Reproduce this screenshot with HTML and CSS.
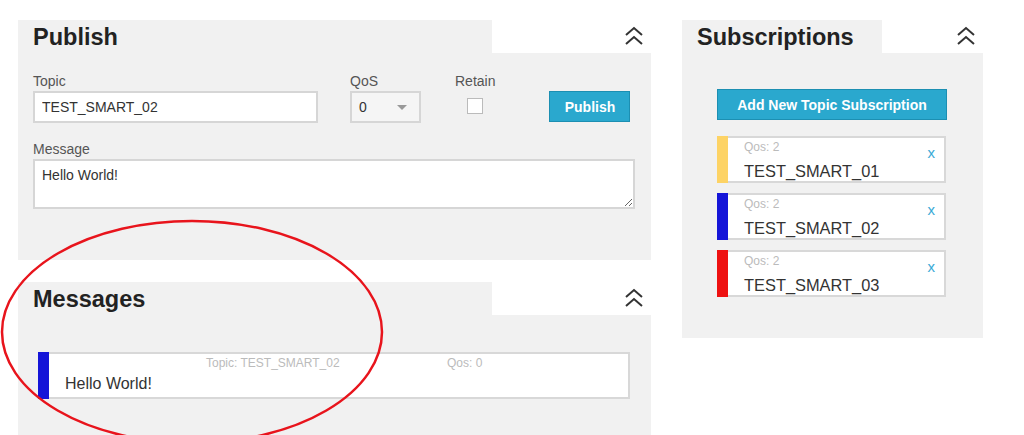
FILE: index.html
```html
<!DOCTYPE html>
<html lang="en">
<head>
    <meta charset="UTF-8">
    <meta name="viewport" content="width=device-width, initial-scale=1.0">
    <title>MQTT Client</title>
    <link rel="stylesheet" href="styles.css">
</head>
<body>
    <div class="layout">
        <div class="left-column">
            <!-- Publish panel -->
            <div class="panel">
                <div class="panel-header">
                    <h2 class="panel-title tab-wide">Publish</h2>
                    <div class="panel-toggle">
                        <svg width="20" height="20" viewBox="0 0 20 20"><path d="M2 9 L10 2 L18 9 M2 18 L10 11 L18 18" fill="none" stroke="#333" stroke-width="2"/></svg>
                    </div>
                </div>
                <div class="panel-body publish-body">
                    <div class="publish-row">
                        <div class="field field-topic">
                            <label>Topic</label>
                            <input type="text" class="text-input" value="TEST_SMART_02">
                        </div>
                        <div class="field field-qos">
                            <label>QoS</label>
                            <div class="select-box">
                                <span>0</span>
                                <span class="select-arrow"></span>
                            </div>
                        </div>
                        <div class="field field-retain">
                            <label>Retain</label>
                            <span class="checkbox"></span>
                        </div>
                        <button class="blue-button publish-button">Publish</button>
                    </div>
                    <div class="field field-message">
                        <label>Message</label>
                        <textarea class="text-area">Hello World!</textarea>
                    </div>
                </div>
            </div>

            <!-- Messages panel -->
            <div class="panel messages-panel">
                <div class="panel-header">
                    <h2 class="panel-title tab-wide">Messages</h2>
                    <div class="panel-toggle">
                        <svg width="20" height="20" viewBox="0 0 20 20"><path d="M2 9 L10 2 L18 9 M2 18 L10 11 L18 18" fill="none" stroke="#333" stroke-width="2"/></svg>
                    </div>
                </div>
                <div class="panel-body messages-body">
                    <div class="message-item">
                        <div class="color-bar bar-blue"></div>
                        <div class="message-content">
                            <div class="message-meta">
                                <span class="meta-topic">Topic: TEST_SMART_02</span>
                                <span class="meta-qos">Qos: 0</span>
                            </div>
                            <div class="message-text">Hello World!</div>
                        </div>
                    </div>
                </div>
            </div>
        </div>

        <!-- Subscriptions panel -->
        <div class="right-column">
            <div class="panel">
                <div class="panel-header">
                    <h2 class="panel-title tab-narrow">Subscriptions</h2>
                    <div class="panel-toggle">
                        <svg width="20" height="20" viewBox="0 0 20 20"><path d="M2 9 L10 2 L18 9 M2 18 L10 11 L18 18" fill="none" stroke="#333" stroke-width="2"/></svg>
                    </div>
                </div>
                <div class="panel-body subs-body">
                    <button class="blue-button add-button">Add New Topic Subscription</button>
                    <div class="sub-list">
                        <div class="sub-item">
                            <div class="color-bar bar-yellow"></div>
                            <div class="sub-content">
                                <div class="sub-qos">Qos: 2</div>
                                <div class="sub-topic">TEST_SMART_01</div>
                            </div>
                            <span class="sub-close">x</span>
                        </div>
                        <div class="sub-item">
                            <div class="color-bar bar-blue"></div>
                            <div class="sub-content">
                                <div class="sub-qos">Qos: 2</div>
                                <div class="sub-topic">TEST_SMART_02</div>
                            </div>
                            <span class="sub-close">x</span>
                        </div>
                        <div class="sub-item">
                            <div class="color-bar bar-red"></div>
                            <div class="sub-content">
                                <div class="sub-qos">Qos: 2</div>
                                <div class="sub-topic">TEST_SMART_03</div>
                            </div>
                            <span class="sub-close">x</span>
                        </div>
                    </div>
                </div>
            </div>
        </div>
    </div>

    <!-- Hand-drawn highlight -->
    <svg class="highlight" width="400" height="216" viewBox="0 0 400 216">
        <ellipse cx="192" cy="113" rx="190" ry="111" fill="none" stroke="#e8141c" stroke-width="2.5"/>
    </svg>
</body>
</html>
```

FILE: styles.css
```css
/* MQTT client layout */
body {
    font-family: "Liberation Sans", Arial, sans-serif;
    background-color: #fff;
    color: #333;
    margin: 0;
    height: 435px;
    overflow: hidden;
}

.layout {
    display: flex;
    gap: 31px;
    padding: 20px 0 0 18px;
}

.left-column {
    width: 633px;
    display: flex;
    flex-direction: column;
    gap: 22px;
}

.right-column {
    width: 301px;
}

/* Panels */
.panel-header {
    display: flex;
    height: 33px;
}

.panel-title {
    margin: 0;
    background-color: #f1f1f1;
    font-size: 23.5px;
    font-weight: bold;
    color: #222;
    padding: 4px 0 0 15px;
    box-sizing: border-box;
    line-height: 26px;
}

.tab-wide {
    width: 474px;
}

.tab-narrow {
    width: 200px;
}

.panel-toggle {
    flex: 1;
    display: flex;
    justify-content: flex-end;
    padding: 6px 7px 0 0;
}

.panel-body {
    background-color: #f1f1f1;
}

/* Publish form */
.publish-body {
    padding: 20px 16px 51px 15px;
}

.publish-row {
    display: flex;
    align-items: flex-start;
}

.field label {
    display: block;
    font-size: 14px;
    line-height: 16px;
    color: #555;
    margin-bottom: 2px;
}

.text-input {
    width: 285px;
    height: 32px;
    box-sizing: border-box;
    border: 2px solid #d6d6d6;
    padding: 0 7px;
    font-family: inherit;
    font-size: 14px;
    color: #333;
    background: #fff;
}

.field-qos {
    margin-left: 32px;
}

.select-box {
    width: 71px;
    height: 32px;
    box-sizing: border-box;
    border: 2px solid #d6d6d6;
    background: #f5f5f5;
    display: flex;
    align-items: center;
    justify-content: space-between;
    padding: 0 12px 0 7px;
    font-size: 14px;
}

.select-arrow {
    width: 0;
    height: 0;
    border-left: 5px solid transparent;
    border-right: 5px solid transparent;
    border-top: 5px solid #999;
}

.field-retain {
    margin-left: 34px;
    display: flex;
    flex-direction: column;
    align-items: center;
}

.checkbox {
    display: block;
    width: 16px;
    height: 16px;
    box-sizing: border-box;
    border: 1px solid #bbb;
    background: #fff;
    margin-top: 7px;
}

.blue-button {
    background-color: #2aa8ce;
    color: #fff;
    border: 1px solid #1c8fb2;
    font-family: inherit;
    font-size: 14px;
    font-weight: bold;
    cursor: pointer;
}

.publish-button {
    width: 81px;
    height: 31px;
    margin: 18px 0 0 54px;
}

.field-message {
    margin-top: 18px;
}

.text-area {
    display: block;
    width: 602px;
    height: 50px;
    box-sizing: border-box;
    border: 2px solid #d6d6d6;
    padding: 6px 7px;
    font-family: inherit;
    font-size: 14px;
    color: #333;
    resize: vertical;
}

/* Messages */
.messages-panel {
    flex: 1;
}

.messages-body {
    padding: 37px 21px 36px 20px;
}

.message-item {
    display: flex;
    height: 47px;
    background: #fff;
    border: 2px solid #d8d8d8;
    border-left: none;
    box-sizing: border-box;
}

.color-bar {
    width: 11px;
    margin: -2px 0;
}

.bar-blue {
    background-color: #1515d8;
}

.bar-yellow {
    background-color: #fdd365;
}

.bar-red {
    background-color: #ee1111;
}

.message-content {
    flex: 1;
    padding-left: 16px;
}

.message-meta {
    font-size: 12px;
    color: #bbb;
    line-height: 14px;
    padding-top: 2px;
}

.meta-topic {
    margin-left: 141px;
}

.meta-qos {
    margin-left: 104px;
}

.message-text {
    font-size: 16px;
    line-height: 18px;
    margin-top: 5px;
    color: #333;
}

/* Subscriptions */
.subs-body {
    padding: 36px 36px 41px 35px;
}

.add-button {
    width: 230px;
    height: 31px;
    display: block;
}

.sub-list {
    display: flex;
    flex-direction: column;
    gap: 10px;
    margin-top: 16px;
}

.sub-item {
    display: flex;
    width: 229px;
    height: 47px;
    background: #fff;
    border: 2px solid #d8d8d8;
    border-left: none;
    box-sizing: border-box;
    position: relative;
}

.sub-content {
    flex: 1;
    padding-left: 16px;
}

.sub-qos {
    font-size: 12px;
    color: #bbb;
    line-height: 14px;
    padding-top: 2px;
}

.sub-topic {
    font-size: 16.4px;
    line-height: 18px;
    margin-top: 8px;
    color: #333;
}

.sub-close {
    position: absolute;
    top: 6px;
    right: 9px;
    color: #3aa9d6;
    font-size: 15px;
}

/* Red highlight drawn over the messages panel */
.highlight {
    position: absolute;
    left: 0;
    top: 219px;
    pointer-events: none;
}
```
